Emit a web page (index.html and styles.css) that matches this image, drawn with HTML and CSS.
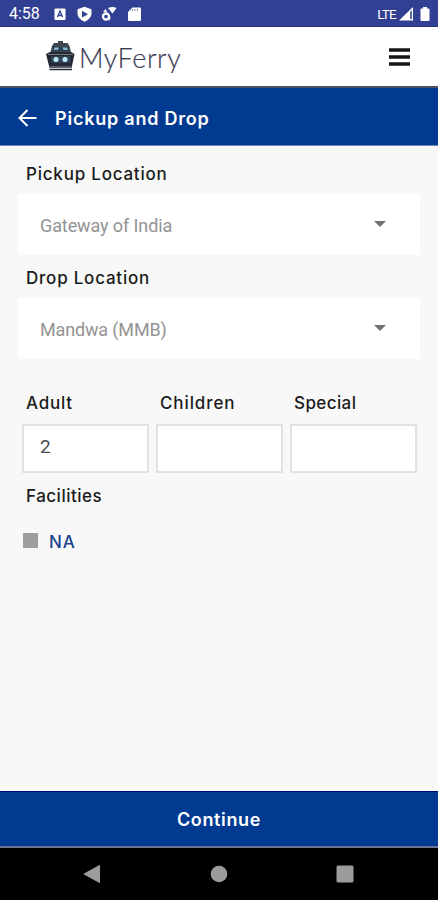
FILE: index.html
```html
<!DOCTYPE html>
<html lang="en">
<head>
<meta charset="utf-8">
<title>MyFerry</title>
<link rel="stylesheet" href="styles.css">
</head>
<body>
<div class="status">
  <span class="clock">4:58</span>
  <svg class="status-left" width="90" height="16" viewBox="0 0 90 16">
    <rect x="1.500" y="2.500" width="11" height="11.500" rx="1" fill="#fff"/>
    <path d="M4.500 11L7 5L9.500 11M5.500 9.500H8.500" fill="none" stroke="#324093" stroke-width="1.300"/>
    <path d="M31.500 .8L38.500 3.300V8Q38 13 31.500 15.700Q25 13 24.500 8V3.300Z" fill="#fff"/>
    <path d="M29 4.800L35 8.200L29 11.600Z" fill="#324093"/>
    <circle cx="53" cy="10.500" r="3" fill="none" stroke="#fff" stroke-width="2.300"/>
    <path d="M55 2Q59.500 0 63.500 2L59.500 7.500ZM50 5.500L53 3L54 6.500ZM55 12L58 11L56 15Z" fill="#fff"/>
    <path d="M79.500 1.500H87Q88 1.500 88 2.500V13.500Q88 15 87 15H76Q75 15 75 14V6Z" fill="#fff"/>
    <path d="M79.500 3V5M82 3V5M84.500 3V5" stroke="#7780b5"/>
  </svg>
  <span class="lte">LTE</span>
  <svg class="status-right" width="34" height="16" viewBox="0 0 34 16">
    <path d="M0 14.500L14 1V14.500Z" fill="#fff"/>
    <path d="M11 6V13H13V4Z" fill="#5c68aa"/>
    <path d="M24 1H28V2.500H29.500Q30.500 2.500 30.500 3.500V14Q30.500 15 29.500 15H22.500Q21.500 15 21.500 14V3.500Q21.500 2.500 22.500 2.500H24Z" fill="#fff"/>
  </svg>
</div>
<header class="brand">
  <svg class="ship" width="30" height="32" viewBox="0 0 30 32">
    <path d="M12 1H17V3H21.500L23.500 6L25 12H4.500L6 6L8 3H12Z" fill="#41464f"/>
    <path d="M7 7H22L23 11H6Z" fill="#263c50"/>
    <path d="M8.500 7.500H13L12 10H7.500ZM16.500 7.500H21L22 10H17.500Z" fill="#86b9d4"/>
    <path d="M0 14L4 12H25L28.500 14L26 26H3Z" fill="#242834"/>
    <path d="M2 14.500H27" stroke="#73777f"/>
    <rect x="5" y="16" width="19.500" height="7" rx="1" fill="#334255"/>
    <circle cx="10" cy="19.500" r="2.500" fill="#bdeaff"/>
    <circle cx="19" cy="19.500" r="2.500" fill="#bdeaff"/>
    <path d="M3 27H26M3.500 29.500H26" stroke="#252936" stroke-width="1.700"/>
  </svg>
  <span class="name">MyFerry</span>
  <svg class="menu" width="22" height="20" viewBox="0 0 22 20"><path d="M0 3H21M0 10H21M0 17H21" stroke="#161616" stroke-width="3.400"/></svg>
</header>
<div class="titlebar">
  <svg width="20" height="20" viewBox="0 0 20 20"><path d="M9.500 2L1.500 10L9.500 18M2 10H18.500" fill="none" stroke="#fff" stroke-width="2"/></svg>
  <h1 class="title">Pickup and Drop</h1>
</div>
<main class="form">
  <div class="label pickup"><span>Pickup Location</span></div>
  <div class="select"><span class="gateway">Gateway of India</span><i class="caret"></i></div>
  <div class="label drop"><span>Drop Location</span></div>
  <div class="select"><span class="mandwa">Mandwa (MMB)</span><i class="caret"></i></div>
  <div class="counts">
    <div class="count"><div class="label adult"><span>Adult</span></div><div class="box">2</div></div>
    <div class="count"><div class="label children"><span>Children</span></div><div class="box"></div></div>
    <div class="count"><div class="label special"><span>Special</span></div><div class="box"></div></div>
  </div>
  <div class="label facilities"><span>Facilities</span></div>
  <div class="facility"><i class="check"></i><span>NA</span></div>
</main>
<div class="continue"><span>Continue</span></div>
<nav class="nav">
  <svg width="18" height="20" viewBox="0 0 18 20"><path d="M1 10L16.500 1.500V18.500Z" fill="#9c9c9c" stroke="#9c9c9c"/></svg>
  <svg width="18" height="20" viewBox="0 0 18 20"><circle cx="9" cy="10" r="8.300" fill="#9c9c9c"/></svg>
  <svg width="18" height="20" viewBox="0 0 18 20"><rect x=".5" y="1.500" width="17" height="17" rx="1.500" fill="#9c9c9c"/></svg>
</nav>
</body>
</html>
```
FILE: styles.css
```css
* { box-sizing: border-box; }
body { margin: 0; width: 438px; height: 900px; display: flex; flex-direction: column; background: #f8f8f8; font-family: Inter, sans-serif; overflow: hidden; }
svg { display: block; flex: none; }
.status { height: 27px; background: #324093; border-bottom: 1px solid #26317d; display: flex; align-items: center; padding: 1px 5px 0 9px; color: #fff; font-family: Roboto, sans-serif; }
.clock { font-size: 16px; width: 44px; }
.lte { margin-left: auto; font-size: 13.5px; letter-spacing: -0.8px; margin-right: 3px; }
.brand { height: 61px; background: #fff; border-bottom: 2px solid #4b5060; display: flex; align-items: center; padding: 0 27px 0 46px; }
.ship { margin-top: -1px; }
.name { font-family: Lato, sans-serif; font-weight: 300; font-size: 27px; line-height: 30px; margin: 2px 0 0 3px; color: #3e3d55; letter-spacing: 0.6px; -webkit-text-stroke: 0.2px #3e3d55; }
.menu { margin-left: auto; margin-top: 1px; }
.titlebar { height: 58px; background: #003b91; border-bottom: 1px solid #7186bd; display: flex; align-items: center; padding: 2px 17px 0 18px; gap: 17px; }
.title { margin: 2px 0 0; color: #fff; font-size: 18px; line-height: 24px; font-weight: 600; letter-spacing: 0.78px; }
.form { flex: 1; padding: 0 18px; }
.label { font-size: 17px; line-height: 24px; font-weight: 500; color: #1b1b1b; padding-left: 8px; letter-spacing: 0.78px; white-space: nowrap; }
.pickup { padding-top: 16px; height: 48px; }
.drop { padding-top: 11px; height: 43px; }
.special { letter-spacing: 0.4px; }
.children { letter-spacing: 0.9px; }
.select { height: 61px; background: #fff; border-radius: 2px; display: flex; align-items: center; justify-content: space-between; padding: 1px 34px 0 22px; font-family: Roboto, sans-serif; font-size: 18px; color: #939393; }
.gateway { letter-spacing: -0.1px; }
.mandwa { letter-spacing: -0.15px; }
.caret { border: 6px solid transparent; border-top-color: #707070; border-bottom: 0; margin-top: -2px; }
.counts { display: grid; grid-template-columns: repeat(3, 127px); gap: 7px; padding: 32px 4px 0; }
.count .label { padding-left: 4px; height: 33px; }
.box { height: 49px; border: 2px solid #e2e2e2; background: #fff; font-family: Roboto, sans-serif; font-size: 19px; line-height: 42px; color: #4b4b4b; padding-left: 16px; }
.facilities { padding-top: 11px; letter-spacing: 0.5px; }
.facility { display: flex; align-items: center; height: 24px; margin-top: 22px; padding-left: 5px; gap: 11px; font-size: 17px; font-weight: 500; color: #194591; letter-spacing: 0.8px; }
.check { width: 15px; height: 15px; background: #9e9e9e; margin-top: -3px; }
.continue { height: 57px; background: #003b91; border-top: 1px solid #000b78; border-bottom: 2px solid #6b7695; display: flex; align-items: center; justify-content: center; color: #fff; font-size: 18px; font-weight: 600; letter-spacing: 0.65px; }
.nav { height: 52px; background: #000; display: flex; align-items: center; justify-content: space-between; padding: 0 84px 0 83px; }
```
